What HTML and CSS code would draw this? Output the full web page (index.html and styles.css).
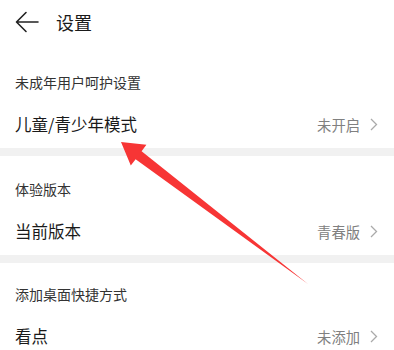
FILE: index.html
```html
<!DOCTYPE html>
<html lang="zh-CN">
<head>
<meta charset="utf-8">
<link rel="stylesheet" href="styles.css">
</head>
<body>
<div class="page">
  <header class="topbar">
    <svg class="back" width="24" height="22" viewBox="0 0 24 22"><path d="M23 11H2M11 1.5L1.5 11L11 20.5" fill="none" stroke="#222" stroke-width="1.6" stroke-linecap="round" stroke-linejoin="round"/></svg>
    <span class="title">设置</span>
  </header>

  <section class="group first">
    <div class="group-title">未成年用户呵护设置</div>
    <div class="row"><span class="label">儿童/青少年模式</span><span class="value">未开启<svg class="chev" width="8" height="13" viewBox="0 0 8 13"><path d="M1 1l5.5 5.5L1 12" fill="none" stroke="#aaa" stroke-width="1.3"/></svg></span></div>
  </section>
  <div class="band"></div>

  <section class="group">
    <div class="group-title">体验版本</div>
    <div class="row"><span class="label">当前版本</span><span class="value">青春版<svg class="chev" width="8" height="13" viewBox="0 0 8 13"><path d="M1 1l5.5 5.5L1 12" fill="none" stroke="#aaa" stroke-width="1.3"/></svg></span></div>
  </section>
  <div class="band"></div>

  <section class="group last">
    <div class="group-title">添加桌面快捷方式</div>
    <div class="row"><span class="label">看点</span><span class="value">未添加<svg class="chev" width="8" height="13" viewBox="0 0 8 13"><path d="M1 1l5.5 5.5L1 12" fill="none" stroke="#aaa" stroke-width="1.3"/></svg></span></div>
  </section>

  <svg class="annot" width="394" height="350" viewBox="0 0 394 350">
    <polygon points="121,142 146.4,144.8 141.6,151.2 308,284 135.6,159.2 130.8,165.6" fill="#f73535"/>
  </svg>
</div>
</body>
</html>
```

FILE: styles.css
```css
html, body {
  margin: 0;
  padding: 0;
  background: #fff;
}
body {
  font-family: "Noto Sans CJK SC", "Noto Sans", sans-serif;
  color: #1a1a1a;
}
.page {
  position: relative;
  width: 394px;
  height: 350px;
  overflow: hidden;
}
.topbar {
  height: 44px;
  display: flex;
  align-items: center;
  padding-left: 15px;
}
.back {
  display: block;
}
.title {
  margin-left: 17px;
  font-size: 18px;
  color: #1a1a1a;
  line-height: 1;
}
.group {
  padding-top: 13px;
}
.group.first {
  padding-top: 18px;
}
.group.last {
  padding-top: 11px;
}
.group-title {
  height: 40px;
  display: flex;
  align-items: center;
  padding-left: 15px;
  font-size: 14px;
  color: #333;
}
.row {
  height: 44px;
  margin-bottom: 2px;
  display: flex;
  align-items: center;
  justify-content: space-between;
  padding: 0 16px 0 15px;
}
.label {
  font-size: 16.5px;
  color: #1a1a1a;
}
.value {
  display: flex;
  align-items: center;
  font-size: 14.3px;
  color: #808080;
}
.chev {
  margin-left: 10px;
  display: block;
}
.band {
  height: 8px;
  background: #f1f1f1;
}
.annot {
  position: absolute;
  left: 0;
  top: 0;
  pointer-events: none;
}
```
